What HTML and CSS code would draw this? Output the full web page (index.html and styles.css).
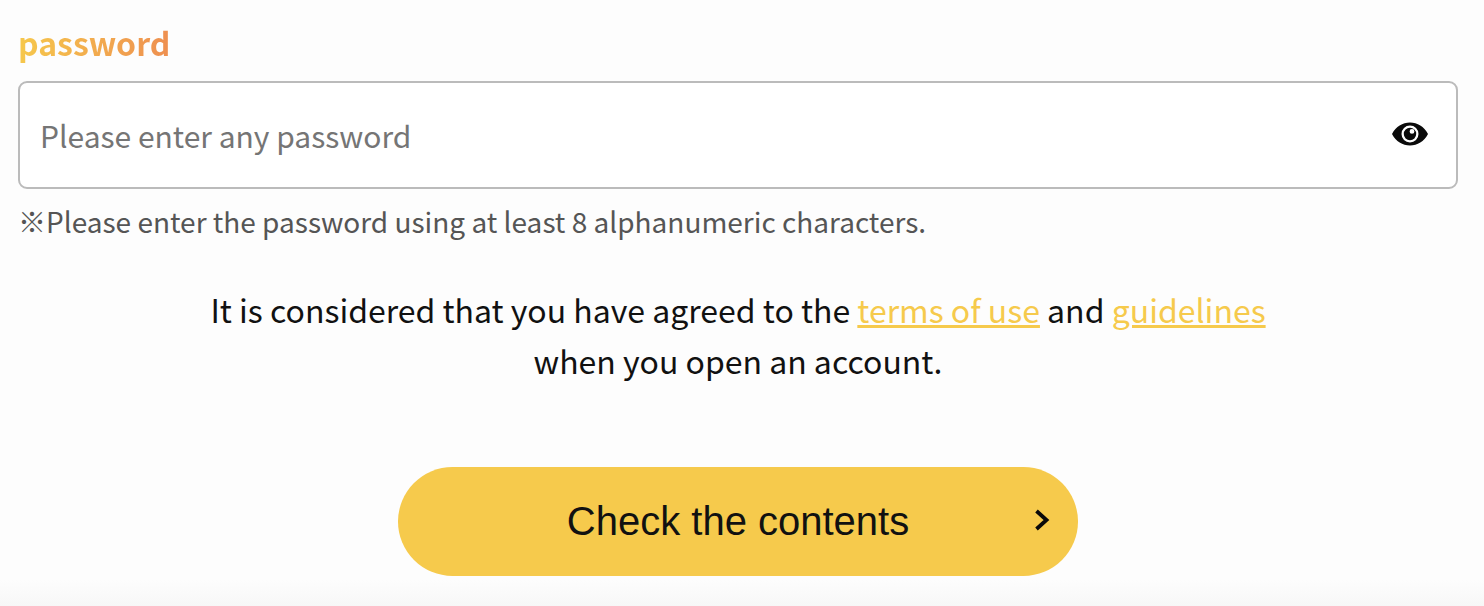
FILE: index.html
```html
<!DOCTYPE html>
<html lang="en">
<head>
    <meta charset="UTF-8">
    <meta name="viewport" content="width=device-width, initial-scale=1.0">
    <title>Password</title>
    <link rel="stylesheet" href="styles.css">
</head>
<body>
    <main class="form">
        <label class="label" for="password"><span class="label-text">password</span></label>
        <div class="field">
            <input class="input" id="password" type="password" placeholder="Please enter any password">
            <svg class="eye" viewBox="0 0 36 24" width="36" height="24" aria-hidden="true">
                <path fill="#0a0a0a" fill-rule="evenodd" d="M0 12C4 4.500 10.500 .5 18 .5S32 4.500 36 12c-4 7.500-10.500 11.500-18 11.500S4 19.500 0 12zM18 3.500a8.500 8.500 0 1 0 0 17 8.500 8.500 0 0 0 0-17z"/>
                <path fill="#0a0a0a" fill-rule="evenodd" d="M18 5.800a6.200 6.200 0 1 1 0 12.400 6.200 6.200 0 0 1 0-12.400zM20 7a2.400 2.400 0 1 0 0 4.800A2.400 2.400 0 0 0 20 7z"/>
            </svg>
        </div>
        <p class="hint">※Please enter the password using at least 8 alphanumeric characters.</p>
        <p class="agree">
            It is considered that you have agreed to the <a href="#">terms of use</a> and <a href="#">guidelines</a><br>
            when you open an account.
        </p>
        <button class="submit" type="button">
            Check the contents
            <svg class="chevron" viewBox="0 0 16 24" width="16" height="24" aria-hidden="true">
                <path fill="none" stroke="#0a0a0a" stroke-width="3.800" d="M2.500 3l10 9-10 9"/>
            </svg>
        </button>
    </main>
    <div class="footer-strip"></div>
</body>
</html>
```

FILE: styles.css
```css
* {
    box-sizing: border-box;
}

body {
    margin: 0;
    height: 606px;
    overflow: hidden;
    background-color: #fdfdfd;
    font-family: "Noto Sans CJK JP", "Noto Sans", sans-serif;
    display: flex;
    flex-direction: column;
}

.form {
    flex: 1;
    padding: 20px 26px 0 18px;
    display: flex;
    flex-direction: column;
}

.label {
    display: block;
    font-size: 32px;
    font-weight: 700;
    line-height: 44px;
    height: 61px;
}

.label-text {
    background: linear-gradient(90deg, #f6c84c, #ee8f50);
    -webkit-background-clip: text;
    background-clip: text;
    color: transparent;
}

.field {
    position: relative;
    height: 108px;
    background-color: #fff;
    border: 2px solid #bbb;
    border-radius: 9px;
}

.input {
    width: 100%;
    height: 100%;
    padding: 0 80px 0 20px;
    border: none;
    outline: none;
    background: transparent;
    font-family: inherit;
    font-size: 30px;
    color: #333;
}

.input::placeholder {
    color: #757575;
    opacity: 1;
}

.eye {
    position: absolute;
    top: 39px;
    right: 28px;
}

.hint {
    margin: 11px 0 0;
    font-size: 28px;
    line-height: 42px;
    color: #555;
}

.agree {
    margin: 42px 0 0;
    font-size: 32px;
    line-height: 51px;
    color: #111;
    text-align: center;
}

.agree a {
    color: #f6ca4c;
}

.submit {
    position: relative;
    align-self: center;
    margin: 81px 0 0;
    width: 680px;
    height: 109px;
    flex-shrink: 0;
    background-color: #f6ca4c;
    border: none;
    border-radius: 55px;
    font-family: "Liberation Sans", Arial, sans-serif;
    font-size: 40px;
    color: #111;
    cursor: pointer;
}

.chevron {
    position: absolute;
    top: 41px;
    right: 28px;
}

.footer-strip {
    height: 26px;
    flex-shrink: 0;
    background: linear-gradient(#fdfdfd, #f7f7f7);
    margin-top: -26px;
}
```
